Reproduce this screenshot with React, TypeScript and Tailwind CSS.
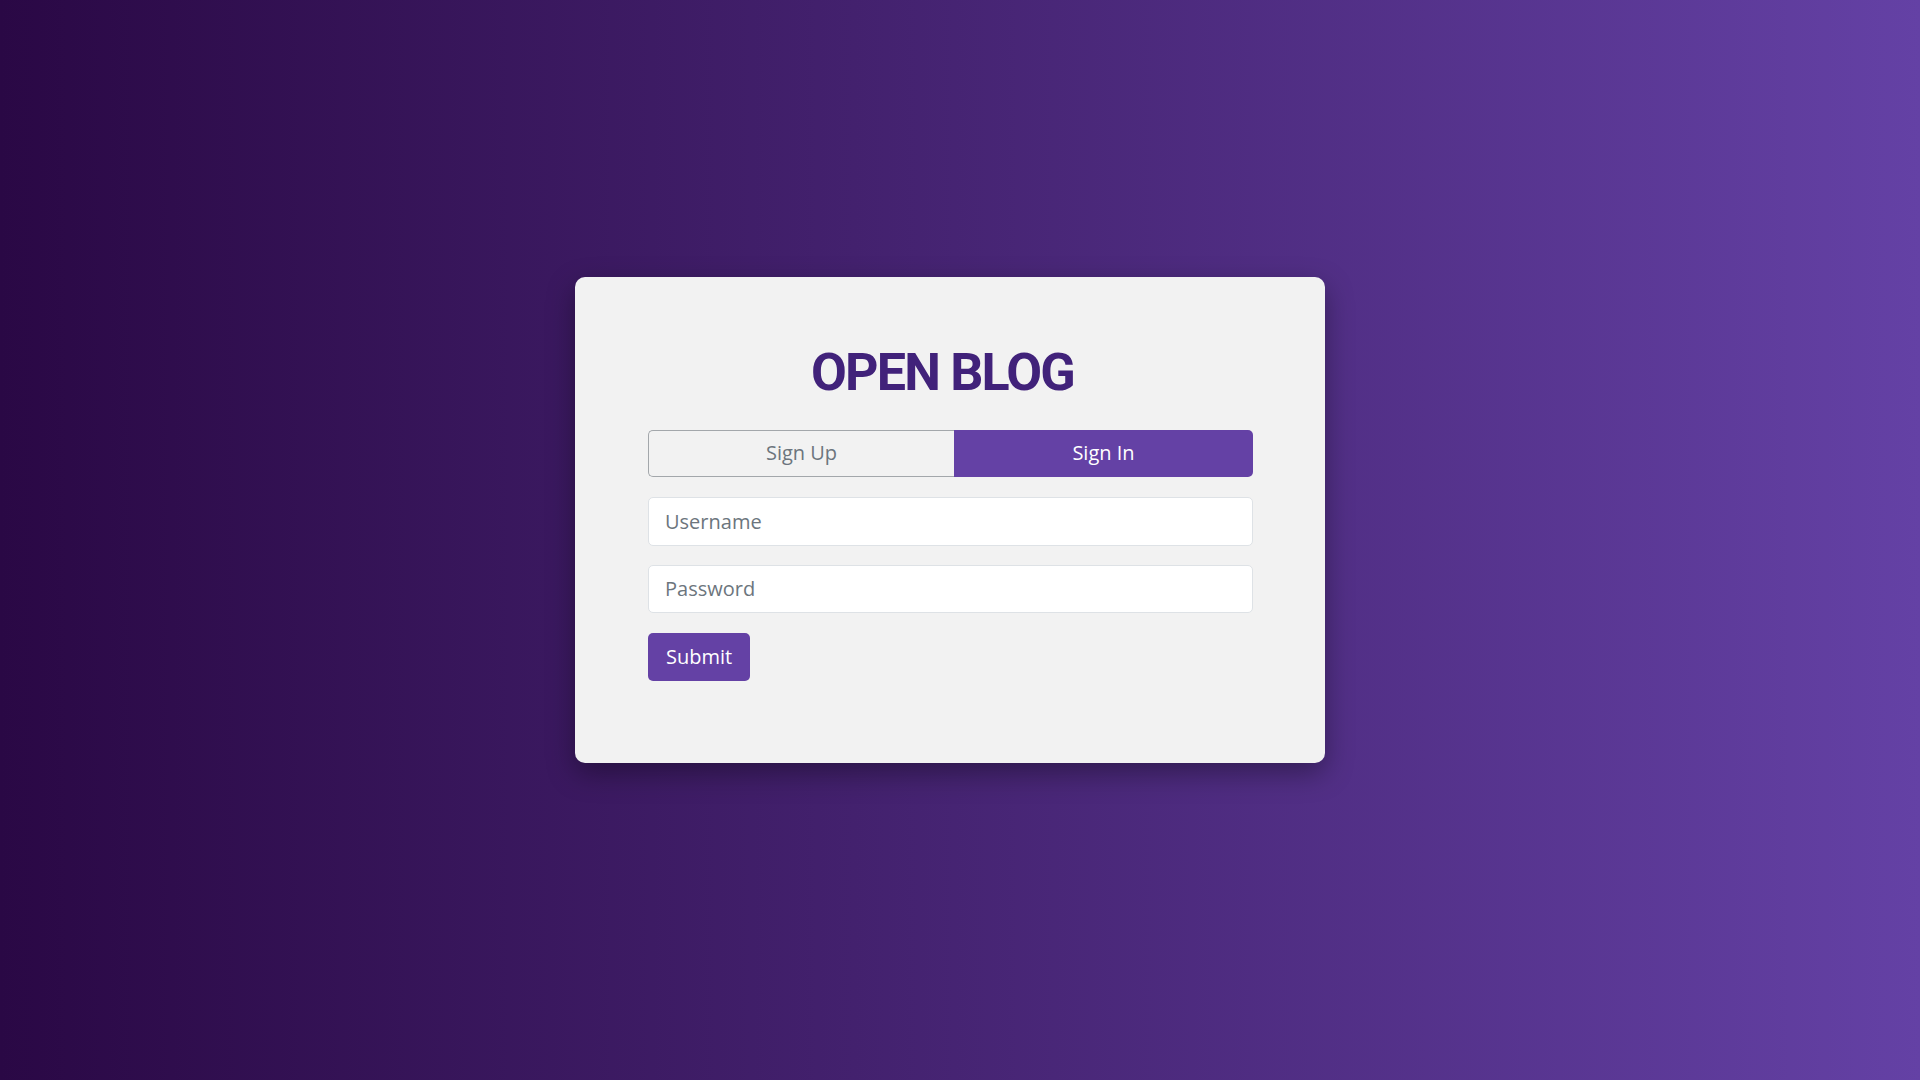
import { useState } from "react";

export default function App() {
  const [mode, setMode] = useState<"signup" | "signin">("signin");

  return (
    <div className="flex h-screen w-full items-center justify-center bg-gradient-to-r from-[#2a0845] to-[#6441a5] pb-[41px] pr-[20px] font-['Open_Sans',sans-serif]">
      <div className="w-[750px] rounded-[10px] bg-[#f2f2f2] pb-[82px] pl-[73px] pr-[72px] pt-[65px] shadow-[0_10px_28px_rgba(0,0,0,0.35)]">
        <h1 className="pr-[16px] text-center font-['Roboto',sans-serif] text-[52px] font-bold leading-[62px] tracking-[-0.035em] text-[#41227a]">
          OPEN BLOG
        </h1>

        <div className="mt-[26px] flex h-[47px]">
          <button
            type="button"
            onClick={() => setMode("signup")}
            className={
              mode === "signup"
                ? "w-[306px] rounded-l-[5px] bg-[#6441a5] text-[20px] text-white"
                : "w-[306px] rounded-l-[5px] border border-r-0 border-[#a3a7ab] bg-transparent text-[20px] text-[#6c757d]"
            }
          >
            Sign Up
          </button>
          <button
            type="button"
            onClick={() => setMode("signin")}
            className={
              mode === "signin"
                ? "flex-1 rounded-r-[5px] bg-[#6441a5] text-[20px] text-white"
                : "flex-1 rounded-r-[5px] border border-l-0 border-[#a3a7ab] bg-transparent text-[20px] text-[#6c757d]"
            }
          >
            Sign In
          </button>
        </div>

        <input
          type="text"
          placeholder="Username"
          className="mt-[20px] block h-[49px] w-full rounded-[5px] border border-[#dee2e6] bg-white px-4 text-[20px] text-[#212529] outline-none placeholder:text-[#6c757d]"
        />
        <input
          type="password"
          placeholder="Password"
          className="mt-[19px] block h-[48px] w-full rounded-[5px] border border-[#dee2e6] bg-white px-4 text-[20px] text-[#212529] outline-none placeholder:text-[#6c757d]"
        />

        <button
          type="button"
          className="mt-[20px] h-[48px] rounded-[5px] bg-[#6441a5] px-[18px] text-[20px] text-white"
        >
          Submit
        </button>
      </div>
    </div>
  );
}
